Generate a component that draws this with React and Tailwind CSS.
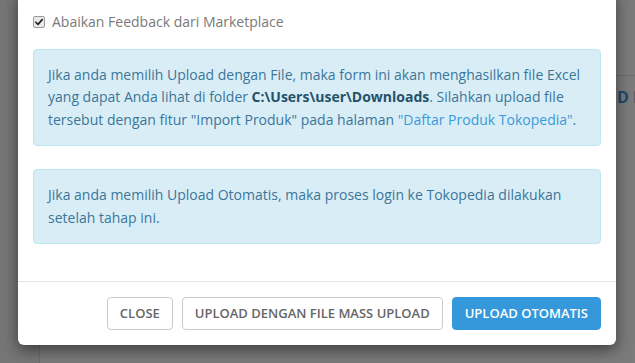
import React from 'react';

// Modal upload produk ke marketplace, di atas halaman yang digelapkan
function CheckIcon() {
  return (
    <span className="flex h-[12px] w-[12px] items-center justify-center rounded-[2px] border border-[#9a9a9a] bg-[#e9e9e9]">
      <svg viewBox="0 0 12 12" className="h-[10px] w-[10px]">
        <path d="M2.2 6.3 L4.8 8.8 L9.8 3.2" fill="none" stroke="#222" strokeWidth="2" strokeLinecap="round" strokeLinejoin="round" />
      </svg>
    </span>
  );
}

export default function App() {
  return (
    <div
      className="relative h-[363px] w-[635px] overflow-hidden bg-[#7b7b7b]"
      style={{ fontFamily: '"Open Sans", "Liberation Sans", sans-serif' }}
    >
      {/* halaman di belakang overlay */}
      <div className="flex h-full">
        <div className="h-full w-[40px] shrink-0 border-r border-[#6c6c6c] bg-[#767676]"></div>
        <div className="flex flex-1 flex-col">
          <div className="h-[76px] border-b border-[#6b6b6b]"></div>
          <div className="pl-[577px] pt-[10px] text-[16px] font-bold leading-[22px] whitespace-nowrap text-[#1d4a6b]">
            D M
          </div>
        </div>
      </div>

      {/* modal */}
      <div className="absolute left-[18px] top-[-10px] w-[598px] rounded-[6px] bg-white shadow-[0_5px_15px_rgba(0,0,0,0.5)]">
        <div className="px-[15px] pb-[37px] pt-[22px]">
          <label className="flex h-[20px] items-center gap-[7px] text-[14px] leading-[20px] text-[#7a7a7a]">
            <CheckIcon />
            <span>Abaikan Feedback dari Marketplace</span>
          </label>

          <div className="mt-[17px] rounded-[4px] border border-[#bce8f1] bg-[#d9edf7] px-[14px] py-[14px] text-[14px] leading-[22.4px] text-[#3b7698]">
            Jika anda memilih Upload dengan File, maka form ini akan menghasilkan file Excel yang dapat Anda lihat di
            folder <b className="font-bold text-[#245269]">C:\Users\user\Downloads</b>. Silahkan upload file tersebut
            dengan fitur "Import Produk" pada halaman <span className="text-[#3a9ad9]">"Daftar Produk Tokopedia"</span>.
          </div>

          <div className="mt-[23px] rounded-[4px] border border-[#bce8f1] bg-[#d9edf7] px-[14px] py-[14px] text-[14px] leading-[22.4px] text-[#3b7698]">
            Jika anda memilih Upload Otomatis, maka proses login ke Tokopedia dilakukan setelah tahap ini.
          </div>
        </div>

        <div className="flex justify-end gap-[9px] border-t border-[#e5e5e5] p-[15px]">
          <button className="h-[33px] rounded-[4px] border border-[#ccc] bg-white px-[12px] text-[13px] font-semibold text-[#666]">
            CLOSE
          </button>
          <button className="h-[33px] rounded-[4px] border border-[#ccc] bg-white px-[12px] text-[13px] font-semibold text-[#666]">
            UPLOAD DENGAN FILE MASS UPLOAD
          </button>
          <button className="h-[33px] rounded-[4px] border border-[#3498db] bg-[#3498db] px-[12px] text-[13px] font-semibold text-white">
            UPLOAD OTOMATIS
          </button>
        </div>
      </div>
    </div>
  );
}
